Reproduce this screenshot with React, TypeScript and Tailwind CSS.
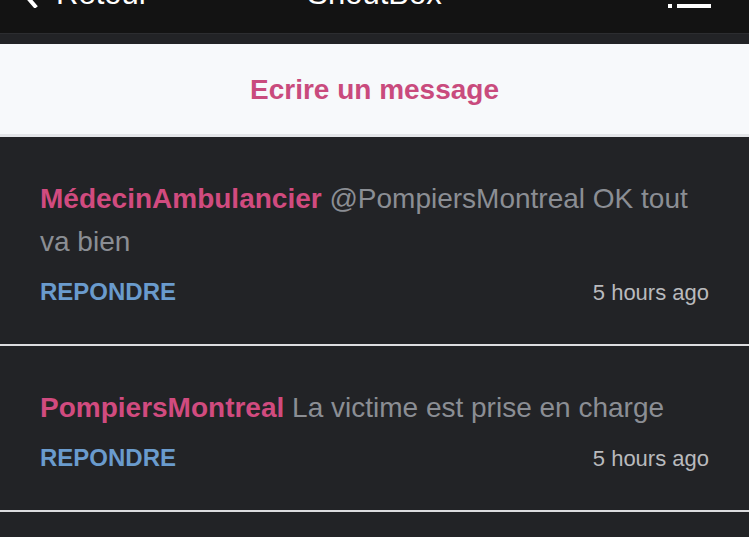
import React from "react";

type Shout = {
  author: string;
  text: string;
  time: string;
};

const shouts: Shout[] = [
  {
    author: "MédecinAmbulancier",
    text: "@PompiersMontreal OK tout va bien",
    time: "5 hours ago",
  },
  {
    author: "PompiersMontreal",
    text: "La victime est prise en charge",
    time: "5 hours ago",
  },
];

function TopBar() {
  return (
    <header className="relative h-[33px] overflow-hidden bg-[#131313] text-white">
      {/* the bar is scrolled, only the bottom of its row shows */}
      <div className="flex items-center justify-between -mt-[22px] pl-[18px] pr-[38px] text-[31px] leading-none">
        <div className="flex items-center gap-[16px]">
          <svg width="22" height="34" viewBox="0 0 22 34" className="mt-[-6px]">
            <path
              d="M17 2 L4 17 L17 32"
              fill="none"
              stroke="white"
              strokeWidth="4"
              strokeLinecap="square"
            />
          </svg>
          <span>Retour</span>
        </div>
        <span className="absolute left-0 right-0 text-center pointer-events-none">
          ShoutBox
        </span>
        <svg width="43" height="30" viewBox="0 0 43 30">
          <rect x="0" y="3" width="4" height="4" fill="white" />
          <rect x="9" y="3" width="34" height="4" fill="white" />
          <rect x="0" y="14" width="4" height="4" fill="white" />
          <rect x="9" y="14" width="34" height="4" fill="white" />
          <rect x="0" y="25" width="4" height="4" fill="white" />
          <rect x="9" y="25" width="34" height="4" fill="white" />
        </svg>
      </div>
    </header>
  );
}

function ShoutItem({ shout }: { shout: Shout }) {
  return (
    <div className="px-[40px] pt-[40px] pb-[37px] border-b-2 border-[#dcdddf]">
      <p className="text-[28px] leading-[43px]">
        <span className="font-bold text-[#d14b7f]">{shout.author}</span>{" "}
        <span className="text-[#8b8e94]">{shout.text}</span>
      </p>
      <div className="mt-[14px] flex h-[30px] items-center justify-between">
        <span className="text-[24px] font-bold text-[#6a9bcd]">REPONDRE</span>
        <span className="text-[22px] text-[#b9babd]">{shout.time}</span>
      </div>
    </div>
  );
}

export default function App() {
  return (
    <div
      className="h-[537px] overflow-hidden bg-[#222326]"
      style={{ fontFamily: '"Liberation Sans", Arial, sans-serif' }}
    >
      <TopBar />
      <div className="h-[11px] border-t border-[#2c2d30] bg-[#222326]" />
      <div className="flex h-[93px] items-center justify-center bg-[#f7f9fb] border-b-[3px] border-[#e3e5e8] pt-[2px]">
        <span className="text-[28px] font-bold text-[#c94b7d]">
          Ecrire un message
        </span>
      </div>
      <div className="bg-[#222326]">
        {shouts.map((s, i) => (
          <ShoutItem key={i} shout={s} />
        ))}
      </div>
    </div>
  );
}
